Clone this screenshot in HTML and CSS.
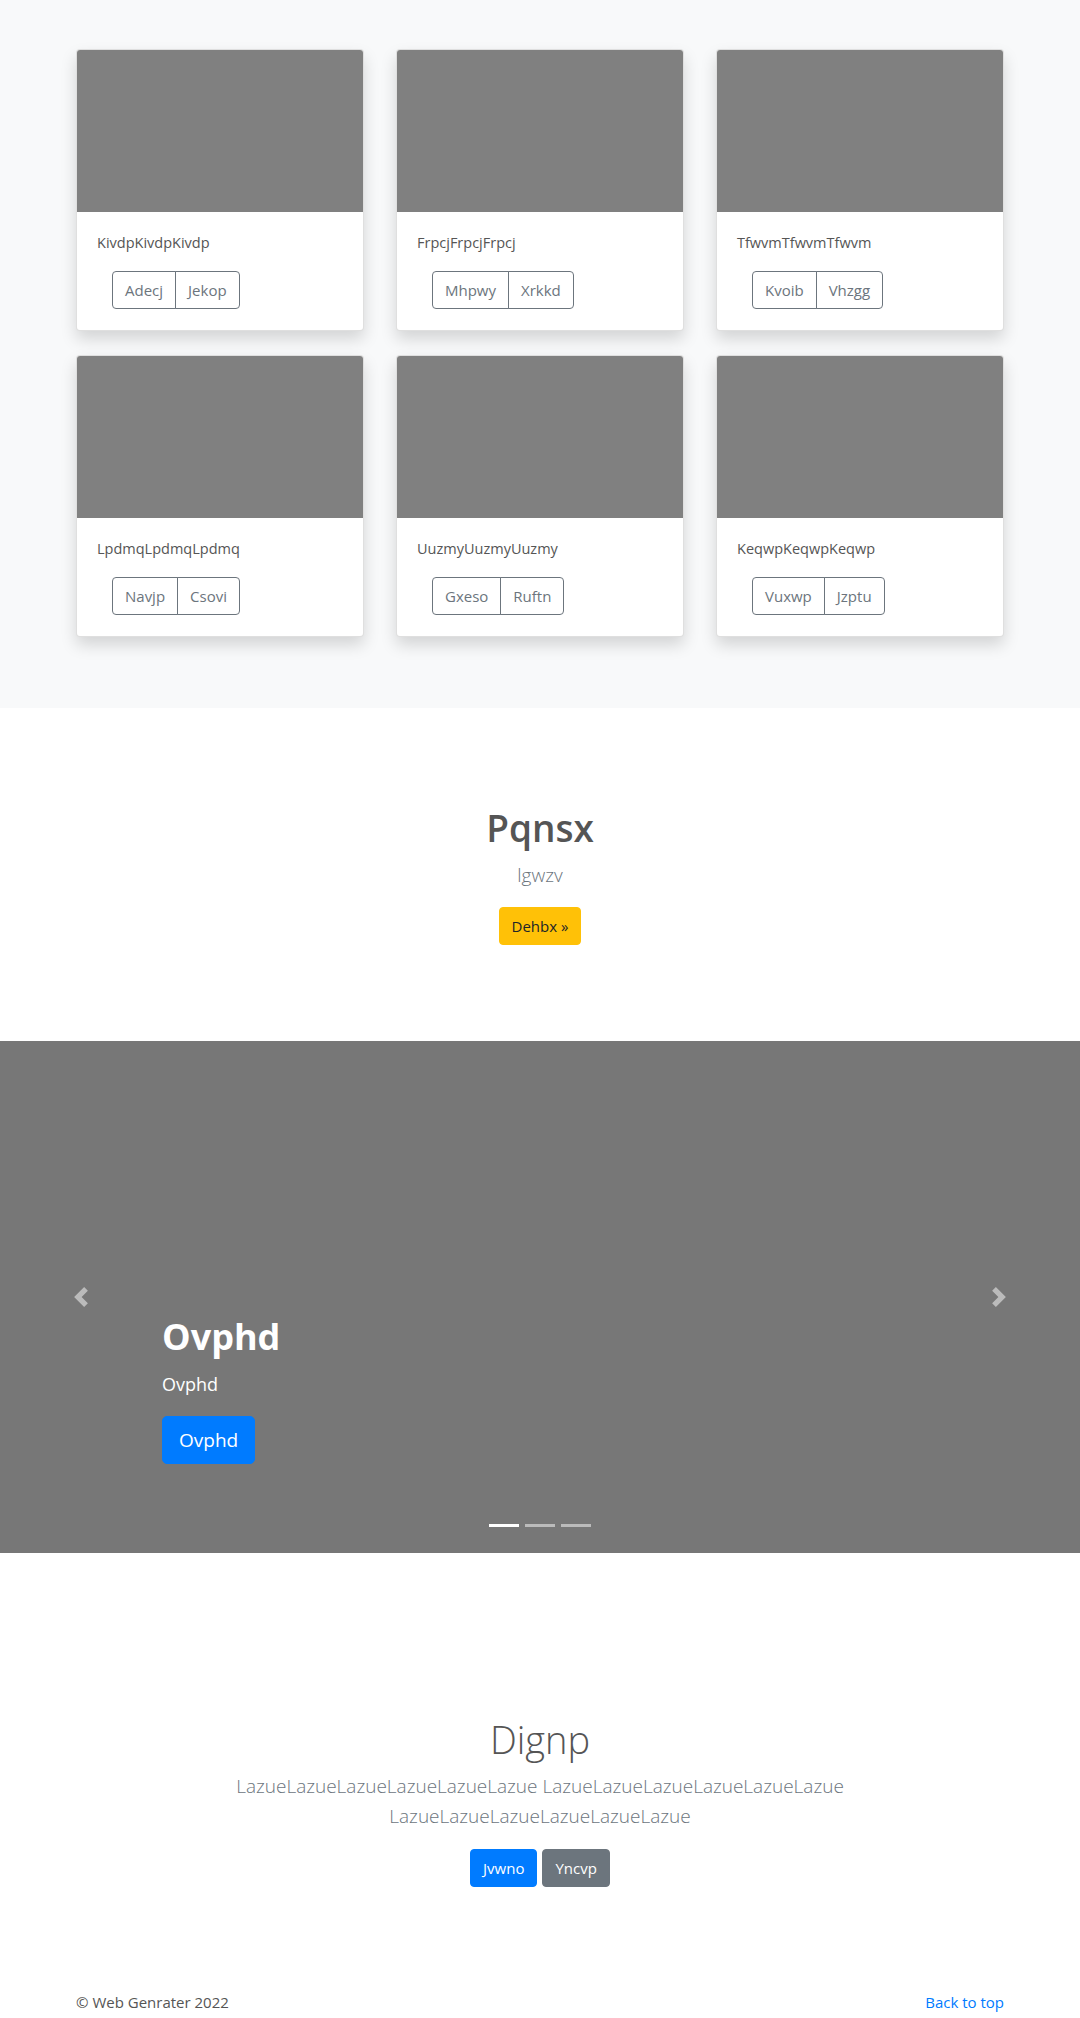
FILE: index.html
```html
<!DOCTYPE html>
<html lang="en">
<head>
<meta charset="utf-8">
<title>Album</title>
<link rel="stylesheet" href="styles.css">
</head>
<body>
<main>
  <section class="album">
    <div class="container">
      <div class="card-grid">
        <div class="card">
          <div class="card-img"></div>
          <div class="card-body">
            <p class="card-text">KivdpKivdpKivdp</p>
            <div class="btn-group"><button class="btn-outline">Adecj</button><button class="btn-outline">Jekop</button></div>
          </div>
        </div>
        <div class="card">
          <div class="card-img"></div>
          <div class="card-body">
            <p class="card-text">FrpcjFrpcjFrpcj</p>
            <div class="btn-group"><button class="btn-outline">Mhpwy</button><button class="btn-outline">Xrkkd</button></div>
          </div>
        </div>
        <div class="card">
          <div class="card-img"></div>
          <div class="card-body">
            <p class="card-text">TfwvmTfwvmTfwvm</p>
            <div class="btn-group"><button class="btn-outline">Kvoib</button><button class="btn-outline">Vhzgg</button></div>
          </div>
        </div>
        <div class="card">
          <div class="card-img"></div>
          <div class="card-body">
            <p class="card-text">LpdmqLpdmqLpdmq</p>
            <div class="btn-group"><button class="btn-outline">Navjp</button><button class="btn-outline">Csovi</button></div>
          </div>
        </div>
        <div class="card">
          <div class="card-img"></div>
          <div class="card-body">
            <p class="card-text">UuzmyUuzmyUuzmy</p>
            <div class="btn-group"><button class="btn-outline">Gxeso</button><button class="btn-outline">Ruftn</button></div>
          </div>
        </div>
        <div class="card">
          <div class="card-img"></div>
          <div class="card-body">
            <p class="card-text">KeqwpKeqwpKeqwp</p>
            <div class="btn-group"><button class="btn-outline">Vuxwp</button><button class="btn-outline">Jzptu</button></div>
          </div>
        </div>
      </div>
    </div>
  </section>

  <section class="hero">
    <h1 class="hero-title">Pqnsx</h1>
    <p class="lead">lgwzv</p>
    <a class="btn btn-warning" href="#">Dehbx »</a>
  </section>

  <section class="carousel">
    <div class="carousel-caption">
      <h1 class="caption-title">Ovphd</h1>
      <p class="caption-text">Ovphd</p>
      <a class="btn btn-lg btn-primary" href="#">Ovphd</a>
    </div>
    <a class="carousel-control prev" href="#">
      <svg width="20" height="20" viewBox="0 0 8 8" fill="#fff"><path d="M5.25 0l-4 4 4 4 1.5-1.5L4.25 4l2.5-2.5L5.25 0z"/></svg>
    </a>
    <a class="carousel-control next" href="#">
      <svg width="20" height="20" viewBox="0 0 8 8" fill="#fff"><path d="M2.75 0l-1.5 1.5L3.75 4l-2.5 2.5L2.75 8l4-4-4-4z"/></svg>
    </a>
    <ol class="indicators">
      <li class="active"></li>
      <li></li>
      <li></li>
    </ol>
  </section>

  <section class="jumbo">
    <div class="jumbo-inner">
      <h1 class="jumbo-title">Dignp</h1>
      <p class="lead">LazueLazueLazueLazueLazueLazue LazueLazueLazueLazueLazueLazue LazueLazueLazueLazueLazueLazue</p>
      <div class="jumbo-actions">
        <a class="btn btn-primary" href="#">Jvwno</a>
        <a class="btn btn-secondary" href="#">Yncvp</a>
      </div>
    </div>
  </section>
</main>

<footer class="footer">
  <div class="container footer-row">
    <p>© Web Genrater 2022</p>
    <a href="#" class="back-top">Back to top</a>
  </div>
</footer>
</body>
</html>
```

FILE: styles.css
```css
* { box-sizing: border-box; }

html, body {
  margin: 0;
  padding: 0;
}

body {
  font-family: "Open Sans", "Noto Sans", "Liberation Sans", sans-serif;
  font-size: 16px;
  line-height: 1.5;
  color: #555;
  background: #fff;
}

p { margin: 0; }
h1 { margin: 0; }

.container {
  width: 928px;
  margin: 0 auto;
}

/* Album */
.album {
  background: #f8f9fa;
  padding: 49px 0 71px;
}

.card-grid {
  display: grid;
  grid-template-columns: repeat(3, 288px);
  column-gap: 32px;
  row-gap: 24px;
}

.card {
  background: #fff;
  border: 1px solid rgba(0, 0, 0, 0.125);
  border-radius: 4px;
  overflow: hidden;
  box-shadow: 0 8px 16px rgba(0, 0, 0, 0.15);
  height: 282px;
}

.card-img {
  height: 162px;
  background: #808080;
}

.card-body {
  padding: 19px 20px 20px;
}

.card-text {
  font-size: 14.5px;
  line-height: 24px;
  margin-bottom: 16px;
  color: #555;
}

.btn-group {
  display: inline-flex;
  margin-left: 15px;
}

.btn-outline {
  font-family: inherit;
  font-size: 15px;
  line-height: 24px;
  padding: 6px 12px;
  height: 38px;
  color: #6c757d;
  background: transparent;
  border: 1px solid #6c757d;
  border-radius: 0;
}

.btn-outline:first-child {
  border-radius: 4px 0 0 4px;
}

.btn-outline:last-child {
  border-radius: 0 4px 4px 0;
  margin-left: -1px;
}

/* Buttons */
.btn {
  display: inline-block;
  font-size: 15px;
  line-height: 24px;
  padding: 6px 12px;
  border: 1px solid transparent;
  border-radius: 4px;
  text-decoration: none;
  text-align: center;
}

.btn-lg {
  font-size: 19px;
  line-height: 30px;
  padding: 8px 16px;
  border-radius: 5px;
}

.btn-warning { background: #ffc107; border-color: #ffc107; color: #212529; }
.btn-primary { background: #007bff; border-color: #007bff; color: #fff; }
.btn-secondary { background: #6c757d; border-color: #6c757d; color: #fff; }

.lead {
  font-size: 19px;
  font-weight: 300;
  line-height: 30px;
  color: #6c757d;
}

/* Hero */
.hero {
  text-align: center;
  padding: 96px 0 96px;
}

.hero-title {
  font-size: 37px;
  font-weight: 600;
  line-height: 48px;
  color: #555;
  margin-bottom: 8px;
}

.hero .lead {
  margin-bottom: 17px;
}

/* Carousel */
.carousel {
  position: relative;
  height: 512px;
  background: #777;
}

.carousel-caption {
  position: absolute;
  left: 162px;
  right: 162px;
  bottom: 89px;
  color: #fff;
  text-align: left;
}

.caption-title {
  font-size: 36px;
  font-weight: 700;
  line-height: 48px;
  margin-bottom: 8px;
}

.caption-text {
  font-size: 18px;
  line-height: 30px;
  margin-bottom: 17px;
}

.carousel-control {
  position: absolute;
  top: 0;
  bottom: 0;
  width: 162px;
  display: flex;
  align-items: center;
  justify-content: center;
  opacity: 0.5;
}

.carousel-control.prev { left: 0; }
.carousel-control.next { right: 0; }

.indicators {
  position: absolute;
  left: 0;
  right: 0;
  bottom: 0;
  margin: 0 0 16px;
  padding: 0;
  list-style: none;
  display: flex;
  justify-content: center;
}

.indicators li {
  width: 30px;
  height: 3px;
  margin: 10px 3px;
  background: #fff;
  opacity: 0.5;
}

.indicators li.active { opacity: 1; }

/* Jumbotron */
.jumbo {
  text-align: center;
  padding: 162px 0 47px;
}

.jumbo-inner {
  max-width: 640px;
  margin: 0 auto;
}

.jumbo-title {
  font-size: 38px;
  font-weight: 300;
  line-height: 48px;
  color: #555;
  margin-bottom: 8px;
}

.jumbo .lead {
  margin-bottom: 16px;
}

.jumbo-actions {
  display: flex;
  justify-content: center;
  gap: 5px;
  margin: 18px 0 8px;
}

/* Footer */
.footer {
  padding: 48px 0 48px;
}

.footer-row {
  display: flex;
  justify-content: space-between;
  align-items: center;
  font-size: 15px;
  line-height: 24px;
}

.back-top {
  color: #007bff;
  text-decoration: none;
}
```
